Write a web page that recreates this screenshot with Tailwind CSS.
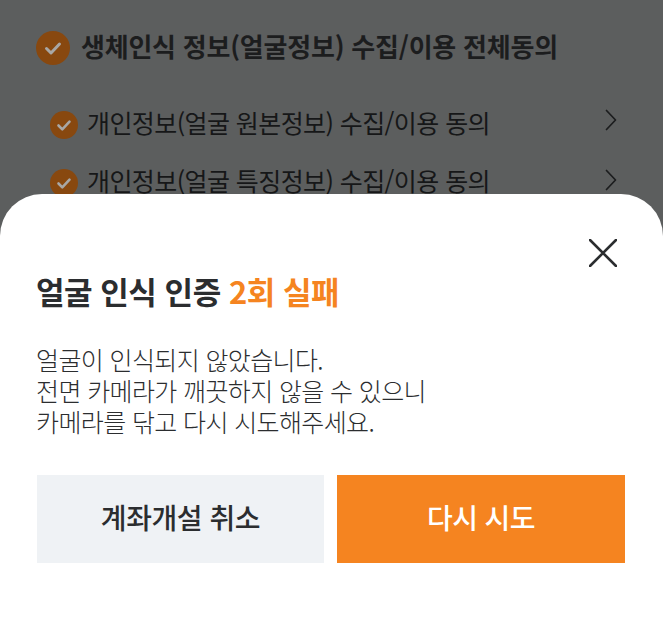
<!DOCTYPE html>
<html lang="ko">
<head>
<meta charset="utf-8">
<script src="https://cdn.jsdelivr.net/npm/@tailwindcss/browser@4"></script>
</head>
<body class="m-0">
<div class="relative w-[663px] h-[618px] overflow-hidden bg-[#5c5e5e] font-['Noto_Sans_CJK_KR',sans-serif]">
  <div class="pl-[36px] pt-[31px] pr-[45px]">
    <div class="flex items-center gap-[11px] h-[34px]">
      <svg class="w-[34px] h-[34px] shrink-0" viewBox="0 0 34 34"><circle cx="17" cy="17" r="17" fill="#88480f"/><path d="M10.500 17.500l4.500 4.500 8.500-9" fill="none" stroke="#a8a7a5" stroke-width="3" stroke-linecap="round" stroke-linejoin="round"/></svg>
      <span class="-mt-[5px] text-[26px] font-bold text-[#1c1d1e] tracking-[-0.22px] leading-none">생체인식 정보(얼굴정보) 수집/이용 전체동의</span>
    </div>
    <div class="flex items-center pl-[14px] mt-[45px] h-[30px]">
      <svg class="w-[28px] h-[28px] shrink-0" viewBox="0 0 28 28"><circle cx="14" cy="14" r="14" fill="#88480f"/><path d="M8.500 14.500l3.800 3.800 7.200-7.600" fill="none" stroke="#a8a7a5" stroke-width="2.600" stroke-linecap="round" stroke-linejoin="round"/></svg>
      <span class="ml-[9px] flex-1 -mt-[6px] text-[25px] text-[#161718] tracking-[-0.58px] leading-none">개인정보(얼굴 원본정보) 수집/이용 동의</span>
      <svg class="w-[14px] h-[24px] shrink-0 -mt-[11px]" viewBox="0 0 14 24"><path d="M2.500 2.500l9 9.500-9 9.500" fill="none" stroke="#1c1d1e" stroke-width="1.700" stroke-linecap="round" stroke-linejoin="round"/></svg>
    </div>
    <div class="flex items-center pl-[14px] mt-[28px] h-[30px]">
      <svg class="w-[28px] h-[28px] shrink-0" viewBox="0 0 28 28"><circle cx="14" cy="14" r="14" fill="#88480f"/><path d="M8.500 14.500l3.800 3.800 7.200-7.600" fill="none" stroke="#a8a7a5" stroke-width="2.600" stroke-linecap="round" stroke-linejoin="round"/></svg>
      <span class="ml-[9px] flex-1 -mt-[6px] text-[25px] text-[#161718] tracking-[-0.58px] leading-none">개인정보(얼굴 특징정보) 수집/이용 동의</span>
      <svg class="w-[14px] h-[24px] shrink-0 -mt-[7px]" viewBox="0 0 14 24"><path d="M2.500 2.500l9 9.500-9 9.500" fill="none" stroke="#1c1d1e" stroke-width="1.700" stroke-linecap="round" stroke-linejoin="round"/></svg>
    </div>
  </div>
  <div class="absolute left-0 right-0 top-[194px] bottom-0 bg-white rounded-t-[42px] pl-[36px] pr-[38px]">
    <div class="flex justify-end pt-[45px] pr-[8px] h-[72px]">
      <svg class="w-[28px] h-[28px]" viewBox="0 0 28 28"><path d="M1 1l26 26M27 1L1 27" fill="none" stroke="#2b2d2f" stroke-width="2.600" stroke-linecap="round"/></svg>
    </div>
    <h2 class="mt-[5px] text-[31px] font-bold text-[#2b2d2f] tracking-[-0.47px] leading-[40px]">얼굴 인식 인증 <span class="text-[#f58420]">2회 실패</span></h2>
    <p class="mt-[33px] text-[25px] font-light text-[#2b2d2f] tracking-[-0.62px] leading-[31px]">얼굴이 인식되지 않았습니다.<br>전면 카메라가 깨끗하지 않을 수 있으니<br>카메라를 닦고 다시 시도해주세요.</p>
    <div class="mt-[38px] ml-[1px] flex gap-[13px] h-[88px]">
      <button class="w-[287px] pb-[4px] bg-[#eff2f5] text-[#2b2d2f] text-[28px] font-medium tracking-[-0.45px]">계좌개설 취소</button>
      <button class="w-[288px] pb-[4px] bg-[#f58420] text-white text-[28px] font-medium tracking-[-0.6px]">다시 시도</button>
    </div>
  </div>
</div>
</body>
</html>
